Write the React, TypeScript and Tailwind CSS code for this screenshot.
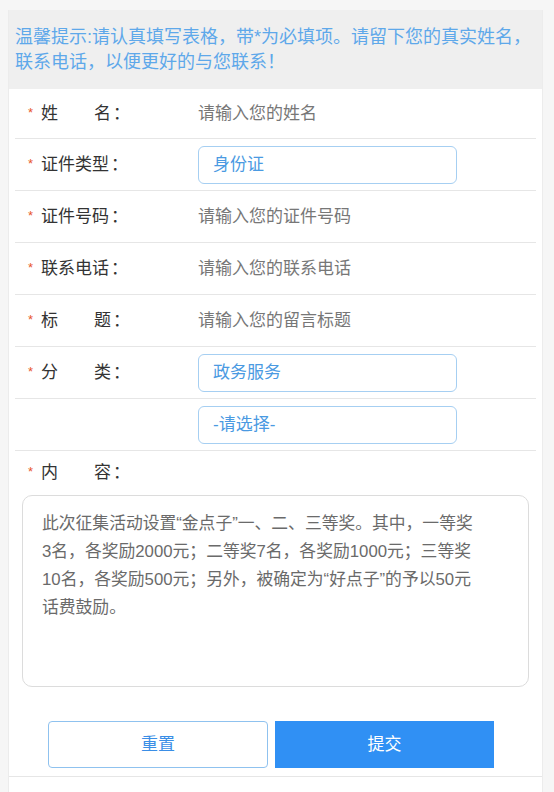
import React from 'react'

const font = { fontFamily: '"Liberation Sans", "Noto Sans CJK SC", "Noto Sans", sans-serif' }

function Label({ text, spaced, required = true }: { text: string; spaced?: boolean; required?: boolean }) {
  return (
    <div className="flex items-center w-[179px] shrink-0 pl-[13px]">
      <span className={`w-[13px] text-[13px] text-[#e8562a] leading-none -mt-[3px] ${required ? '' : 'invisible'}`}>*</span>
      {spaced ? (
        <span className="flex justify-between w-[70px] text-[#333]">
          <span>{text[0]}</span>
          <span>{text[1]}</span>
        </span>
      ) : (
        <span className="text-[#333]">{text}</span>
      )}
      {text && <span className="text-[#333] ml-[2px]">：</span>}
    </div>
  )
}

function Row({ children, tall }: { children: React.ReactNode; tall?: boolean }) {
  return (
    <div className={`flex items-center mx-[6px] border-b border-[#e6e6e6] ${tall ? 'h-[52px]' : 'h-[50px]'}`}>
      {children}
    </div>
  )
}

function Placeholder({ text }: { text: string }) {
  return <div className="pl-[4px] text-[#777]">{text}</div>
}

function Select({ text }: { text: string }) {
  return (
    <div className="ml-[4px] w-[259px] h-[38px] flex items-center px-[14px] border-[1.5px] border-[#a6cff2] rounded-[6px] text-[#4a9ae2]">
      {text}
    </div>
  )
}

export default function App() {
  return (
    <div className="min-h-screen bg-[#f6f6f6] pt-[10px] pl-[8px] pr-[11px]" style={font}>
      <div className="bg-white border-l border-r border-[#ececec] text-[17px]">
        <div className="bg-[#efefef] px-[6px] pt-[15px] pb-[14px] text-[18px] leading-[25px] text-[#5ea8ea]">
          温馨提示:请认真填写表格，带*为必填项。请留下您的真实姓名，联系电话，以便更好的与您联系！
        </div>

        <Row>
          <Label text="姓名" spaced />
          <Placeholder text="请输入您的姓名" />
        </Row>
        <Row tall>
          <Label text="证件类型" />
          <Select text="身份证" />
        </Row>
        <Row tall>
          <Label text="证件号码" />
          <Placeholder text="请输入您的证件号码" />
        </Row>
        <Row tall>
          <Label text="联系电话" />
          <Placeholder text="请输入您的联系电话" />
        </Row>
        <Row tall>
          <Label text="标题" spaced />
          <Placeholder text="请输入您的留言标题" />
        </Row>
        <Row tall>
          <Label text="分类" spaced />
          <Select text="政务服务" />
        </Row>
        <Row tall>
          <Label text="" required={false} />
          <Select text="-请选择-" />
        </Row>

        <div className="flex items-center h-[44px] mx-[6px]">
          <Label text="内容" spaced />
        </div>

        <div className="mx-[13px] h-[192px] border border-[#dcdcdc] rounded-[10px] pl-[19px] pt-[14px]">
          <div className="w-[440px] text-[16.8px] leading-[28px] text-[#6a6a6a]">
            此次征集活动设置“金点子”一、二、三等奖。其中，一等奖3名，各奖励2000元；二等奖7名，各奖励1000元；三等奖10名，各奖励500元；另外，被确定为“好点子”的予以50元话费鼓励。
          </div>
        </div>

        <div className="flex gap-[7px] pl-[39px] pt-[34px] pb-[8px] border-b border-[#e6e6e6]">
          <button className="w-[220px] h-[47px] border-[1.5px] border-[#8fc2ef] rounded-[4px] bg-white text-[#3a8ee6] text-[17px]">
            重置
          </button>
          <button className="w-[219px] h-[47px] bg-[#3090f4] text-white text-[17px]">
            提交
          </button>
        </div>
        <div className="h-[20px]" />
      </div>
    </div>
  )
}
